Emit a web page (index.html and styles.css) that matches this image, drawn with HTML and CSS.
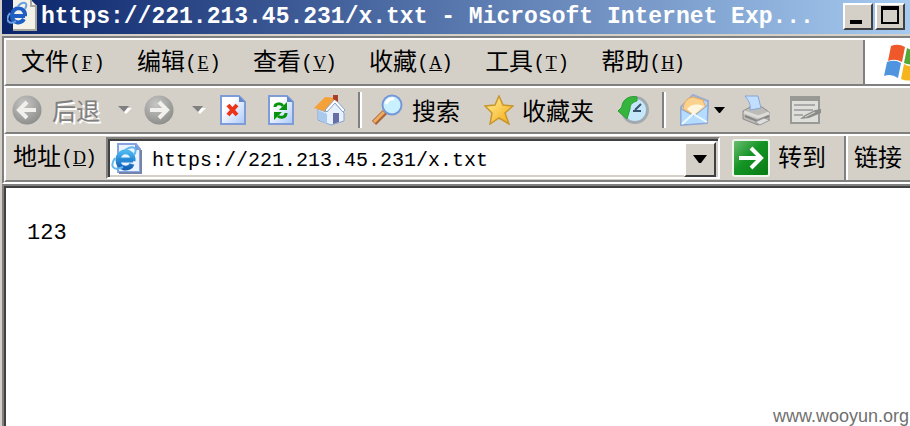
FILE: index.html
```html
<!DOCTYPE html>
<html lang="zh-CN">
<head>
<meta charset="utf-8">
<title>https://221.213.45.231/x.txt</title>
<link rel="stylesheet" href="styles.css">
</head>
<body>
<svg class="defs" aria-hidden="true">
  <defs>
    <linearGradient id="paper" x1="0" y1="0" x2="1" y2="1"><stop offset="0.3" stop-color="#fff"/><stop offset="1" stop-color="#a9c8f8"/></linearGradient>
    <radialGradient id="disc" cx="0.4" cy="0.3" r="0.75"><stop offset="0" stop-color="#c6c6c4"/><stop offset="1" stop-color="#8b8b89"/></radialGradient>
    <linearGradient id="gold" x1="0" y1="0" x2="1" y2="1"><stop offset="0" stop-color="#fff3a0"/><stop offset="1" stop-color="#f5a70c"/></linearGradient>
    <linearGradient id="blue" x1="0" y1="0" x2="0" y2="1"><stop offset="0" stop-color="#49b5ef"/><stop offset="1" stop-color="#1262b8"/></linearGradient>
    <linearGradient id="go" x1="0" y1="0" x2="1" y2="1"><stop offset="0" stop-color="#6fbf74"/><stop offset="0.45" stop-color="#159425"/><stop offset="1" stop-color="#087a12"/></linearGradient>
  </defs>
</svg>
<div class="window">
  <header class="titlebar">
    <svg class="page-icon" width="32" height="32" viewBox="0 0 32 32" aria-hidden="true">
      <path d="M6 0h18l6 6v25H6z" fill="#f4f2e8"/><path d="M29 7v23H6M24 0v6h6" fill="none" stroke="#a8a69e" stroke-width="2"/>
      <path d="M18 16H6M18 16C19 6 5 6 5 15s9 9 12 4" fill="none" stroke="#1f5fc4" stroke-width="4"/>
      <path d="M3 13C-3 21 3 25 9 21M11 6c5-5 11-4 7 3" fill="none" stroke="#6b9fe0" stroke-width="2"/>
    </svg>
    <h1 class="title">https://221.213.45.231/x.txt - Microsoft Internet Exp...</h1>
    <button class="caption" aria-label="最小化"><svg width="26" height="22" viewBox="0 0 26 22"><path d="M5 15h12v4H5z"/></svg></button>
    <button class="caption" aria-label="最大化"><svg width="26" height="22" viewBox="0 0 26 22"><path d="M4 1h18v18H4zM6 5v12h14V5z" fill-rule="evenodd"/></svg></button>
  </header>
  <div class="bars">
    <div class="row menu-row">
      <nav class="menu">
        <button>文件<span class="key">(<u>F</u>)</span></button>
        <button>编辑<span class="key">(<u>E</u>)</span></button>
        <button>查看<span class="key">(<u>V</u>)</span></button>
        <button>收藏<span class="key">(<u>A</u>)</span></button>
        <button>工具<span class="key">(<u>T</u>)</span></button>
        <button>帮助<span class="key">(<u>H</u>)</span></button>
      </nav>
      <div class="brand">
        <svg width="26" height="40" viewBox="0 0 26 40" aria-hidden="true">
          <path d="M7 4q7-3 14 1l-3 15q-7-4-14-1z" fill="#ee582a"/>
          <path d="M23 6q7 4 14 1l-3 14q-7 3-14 0z" fill="#55a832"/>
          <path d="M3 20q8-3 14 1l-3 15q-7-5-14-2z" fill="#4e94df"/>
          <path d="M20 22q7 4 14 1l-3 14q-7 3-14 0z" fill="#f5b51d"/>
        </svg>
      </div>
    </div>
    <div class="row toolbar">
      <button class="tool back off">
        <svg width="30" height="30" viewBox="0 0 30 30"><circle cx="15" cy="15" r="14.5" fill="url(#disc)"/><path d="M24 15H8M15 7l-8 8 8 8" fill="none" stroke="#f1f0ec" stroke-width="4"/></svg>后退</button>
      <button class="tool drop" aria-label="后退列表"><svg width="14" height="8" viewBox="0 0 14 8"><path d="M2 2h12L8 8z" fill="#fff"/><path d="M0 0h11L6 6z" fill="#808080"/></svg></button>
      <button class="tool" aria-label="前进"><svg width="30" height="30" viewBox="0 0 30 30"><circle cx="15" cy="15" r="14.5" fill="url(#disc)"/><path d="M6 15h16M15 7l8 8-8 8" fill="none" stroke="#f1f0ec" stroke-width="4"/></svg></button>
      <button class="tool drop" aria-label="前进列表"><svg width="14" height="8" viewBox="0 0 14 8"><path d="M2 2h12L8 8z" fill="#fff"/><path d="M0 0h11L6 6z" fill="#808080"/></svg></button>
      <button class="tool stop" aria-label="停止"><svg width="26" height="30" viewBox="0 0 26 30"><path d="M1 1h18l6 6v22H1z" fill="url(#paper)" stroke="#7f9cd8" stroke-width="2"/><path d="M19 1v6h6z" fill="#6687cb"/><path d="M8 10l9 10M17 10l-9 10" stroke="#ec3418" stroke-width="4"/></svg></button>
      <button class="tool refresh" aria-label="刷新"><svg width="26" height="30" viewBox="0 0 26 30"><path d="M1 1h18l6 6v22H1z" fill="url(#paper)" stroke="#7f9cd8" stroke-width="2"/><path d="M19 1v6h6z" fill="#6687cb"/><path d="M7 12c0-4 6-4 8-1M18 18c0 5-6 5-8 3" fill="none" stroke="#07940d" stroke-width="3"/><path d="M19 7v8h-8zM6 25v-8h8z" fill="#07940d"/></svg></button>
      <button class="tool home" aria-label="主页"><svg width="32" height="32" viewBox="0 0 32 32"><path d="M4 15l8 3 9-9 9 10v8l-13 4-13-5z" fill="#e8f2ff" stroke="#86a5cf"/><path d="M4 16l9 4v10l-9-5z" fill="#a9c9ed"/><path d="M0 14L11 3l11 1-9 14z" fill="#f5a13a"/><path d="M21 5l10 11-2 2-8-9-8 9-2-2z" fill="#fff" stroke="#8ba6c9"/><path d="M19 1h5v7l-5-3z" fill="#a83e2c"/><path d="M19 19h6v9l-6 2z" fill="#656fa6"/></svg></button>
      <span class="sep"></span>
      <button class="tool search"><svg width="32" height="32" viewBox="0 0 32 32"><path d="M13 18L2 29" stroke="#a9663a" stroke-width="6"/><path d="M12 18L2 28" stroke="#f1ac64" stroke-width="3"/><circle cx="20" cy="11" r="9.5" fill="#c8f0ff" stroke="#7698d8" stroke-width="2"/><path d="M14 10q2-6 8-5" fill="none" stroke="#fff" stroke-width="3"/></svg>搜索</button>
      <button class="tool fav"><svg width="30" height="30" viewBox="0 0 30 30"><path d="M15 1l4 9 10 1-8 7 4 11-10-6-9 6 2-11-7-7 10-1z" fill="url(#gold)" stroke="#c9962d" stroke-width="1.5"/></svg>收藏夹</button>
      <button class="tool history" aria-label="历史"><svg width="32" height="30" viewBox="0 0 32 30"><circle cx="17" cy="15" r="12.5" fill="#c4e8fa" stroke="#a3a9b0" stroke-width="3"/><path d="M17 15l6-6M15 16h8" stroke="#38546c" stroke-width="2"/><path d="M19 2C11 0 4 5 4 12l-4 4 9 8 3-10c0-5 3-7 7-8z" fill="#35b53b" stroke="#2d9c37"/></svg></button>
      <span class="sep"></span>
      <button class="tool mail" aria-label="邮件"><svg width="30" height="32" viewBox="0 0 30 32"><path d="M1 13L13 1l15 6-1 22-26 2z" fill="#b9dafa" stroke="#9cadd2" stroke-width="2"/><path d="M3 15q1-11 10-12l10 3 3 8-12 7z" fill="#fbd18f" stroke="#e6a95b"/><path d="M7 15q6-7 17-3l-10 9z" fill="#fff6df"/><path d="M1 15l13 7 14-11-1 18-26 2z" fill="#b4dcff" stroke="#8aa5d5"/><path d="M2 30l11-10 14 8" fill="none" stroke="#eff9ff" stroke-width="2"/></svg></button>
      <button class="tool drop mail-drop" aria-label="邮件列表"><svg width="12" height="7" viewBox="0 0 12 7"><path d="M0 0h11L6 6H5z"/></svg></button>
      <button class="tool print" aria-label="打印"><svg width="30" height="32" viewBox="0 0 30 32"><path d="M1 17l9-5 10 1 7 5v8l-11 5-15-6z" fill="#bcbbb8" stroke="#8b8b89"/><path d="M3 2h13l3 12-11 2c1-5-1-9-5-14z" fill="#c2deff" stroke="#86a5d5"/><path d="M2 18l14 5 11-4" fill="none" stroke="#dddcd8" stroke-width="3"/><path d="M3 22l12 5 12-5" fill="none" stroke="#858583" stroke-width="2"/><path d="M13 28l9-4 6 2-10 5z" fill="#ddd" stroke="#999"/></svg></button>
      <button class="tool edit" aria-label="编辑"><svg width="32" height="30" viewBox="0 0 32 30"><path d="M1 2h28v26H1z" fill="#dededb" stroke="#999995" stroke-width="2"/><path d="M1 2h28v4H1z" fill="#999994"/><path d="M4 10h21M4 15h19M4 20h9" stroke="#aaa" stroke-width="2"/><path d="M10 24l5-4 10-5 6-1v4l-12 5z" fill="#8b8b88"/><path d="M15 22l10-5" stroke="#ddd"/></svg></button>
    </div>
    <form class="row address-row" onsubmit="return false">
      <label for="address">地址<span class="key">(<u>D</u>)</span></label>
      <div class="field">
        <svg width="32" height="32" viewBox="0 0 32 32" aria-hidden="true"><path d="M7 1h18l4 5v23H7z" fill="#eaf3ff" stroke="#86a4e0" stroke-width="2"/><path d="M24 1v6h5z" fill="#7796d8"/><path d="M30 7v23H8" fill="none" stroke="#7683a8" stroke-width="2"/><path d="M22 17H8M22 18c1-12-15-12-15-1 0 10 12 10 14 4" fill="none" stroke="url(#blue)" stroke-width="5"/><path d="M8 17h14" stroke="#2588d4" stroke-width="3"/><path d="M4 15c-6 9-1 13 8 9M14 7c7-5 14-3 9 5" fill="none" stroke="#62b8ec" stroke-width="2"/></svg>
        <input id="address" type="text" value="https://221.213.45.231/x.txt" spellcheck="false">
        <button type="button" class="open" aria-label="打开列表"><svg width="16" height="8" viewBox="0 0 16 8"><path d="M1 0h14L9 8H7z"/></svg></button>
      </div>
      <button class="go"><svg width="38" height="38" viewBox="0 0 38 38"><rect x="1" y="1" width="36" height="36" rx="2" fill="url(#go)" stroke="#eef6eb" stroke-width="2"/><path d="M7 19h21M19 9l10 10-10 10" fill="none" stroke="#fff" stroke-width="4"/></svg><span>转到</span></button>
      <button type="button" class="links">链接</button>
    </form>
  </div>
  <main class="content"><pre>123</pre><footer>www.wooyun.org</footer></main>
</div>
</body>
</html>
```
FILE: styles.css
```css
* { box-sizing: border-box; }
body {
  margin: 0;
  background: #d4d0c8;
  color: #000;
  font: 24px/28px "Noto Sans CJK SC", sans-serif;
  overflow: hidden;
}
.defs { position: absolute; width: 0; height: 0; }
svg { display: block; flex: none; }
button {
  padding: 0;
  border: 0;
  background: none;
  color: inherit;
  font: inherit;
  white-space: nowrap;
}
.window {
  display: flex;
  flex-direction: column;
  min-height: 100vh;
  padding-left: 2px;
}
.titlebar {
  display: flex;
  align-items: center;
  gap: 2px;
  height: 34px;
  padding: 0 5px 2px;
  background: linear-gradient(90deg, #0a246a, #a6caf0);
}
.title {
  flex: 1;
  min-width: 0;
  margin: 0;
  padding-top: 2px;
  overflow: hidden;
  color: #fff;
  font: bold 23px/28px "Liberation Mono", monospace;
  white-space: nowrap;
}
.caption {
  height: 27px;
  border: 2px solid;
  border-color: #fff #404040 #404040 #fff;
  background: #d4d0c8;
}
.bars {
  margin-top: 2px;
  border-top: 2px solid #808080;
  border-bottom: 2px solid #fff;
  border-left: 2px solid #808080;
}
.row {
  display: flex;
  align-items: center;
  height: 48px;
  border-top: 2px solid #fff;
  border-bottom: 2px solid #808080;
  border-left: 2px solid #fff;
}
.menu {
  display: flex;
  flex: 1;
  align-self: stretch;
  align-items: center;
  gap: 32px;
  padding: 0 0 2px 15px;
  border-right: 2px solid #808080;
}
.key {
  display: inline-block;
  vertical-align: middle;
  font: 20px/24px "Liberation Mono", monospace;
}
u {
  display: inline-block;
  width: 12px;
  font: 18px/20px "Liberation Serif", serif;
  text-align: center;
}
.brand {
  display: flex;
  align-self: stretch;
  align-items: center;
  justify-content: flex-end;
  width: 45px;
  border-left: 2px solid #fff;
  background: #fff;
}
.tool { display: flex; align-items: center; gap: 10px; }
.toolbar { padding-left: 6px; }
.off { color: #808080; text-shadow: 2px 2px #fff; }
.drop { margin: 0 12px 0 18px; }
.stop { margin-left: 2px; }
.refresh { margin-left: 22px; }
.home { margin-left: 20px; }
.sep {
  width: 4px;
  height: 36px;
  margin: 0 10px 0 12px;
  border-left: 2px solid #808080;
  border-right: 2px solid #fff;
}
.search { gap: 8px; }
.fav { gap: 8px; margin-left: 24px; }
.history { margin-left: 24px; }
.mail { margin-left: 4px; }
.mail-drop { margin: 0 16px 0 4px; }
.edit { margin-left: 18px; }
.address-row { padding-left: 7px; }
.address-row label { padding-bottom: 4px; }
.field {
  display: flex;
  flex: 1;
  align-items: center;
  min-width: 0;
  height: 42px;
  margin: 0 12px 0 9px;
  padding: 2px 2px 0 3px;
  border: 2px solid;
  border-color: #808080 #fff #fff #808080;
  box-shadow: inset 2px 2px #404040, inset -2px -2px #d4d0c8;
  background: #fff;
}
.field input {
  flex: 1;
  min-width: 0;
  padding: 4px 0 0 9px;
  border: 0;
  outline: 0;
  background: none;
  font: 20px/28px "Liberation Mono", monospace;
}
.open {
  display: flex;
  align-items: center;
  justify-content: center;
  width: 32px;
  height: 35px;
  border: 2px solid;
  border-color: #fff #404040 #404040 #fff;
  background: #d4d0c8;
}
.go { display: flex; align-items: center; gap: 8px; }
.go span { padding-bottom: 4px; }
.links {
  align-self: stretch;
  margin-left: 18px;
  padding: 0 8px 4px;
  border-left: 2px solid #808080;
  box-shadow: inset 2px 0 #fff;
}
.content {
  display: flex;
  flex: 1;
  flex-direction: column;
  justify-content: space-between;
  margin: 2px 0 0 2px;
  border: 2px solid #404040;
  border-width: 2px 0 0 2px;
  outline: 2px solid #808080;
  background: #fff;
}
.content pre {
  margin: 0;
  padding: 32px 21px;
  font: 22px/28px "Liberation Mono", monospace;
}
.content footer {
  padding-right: 1px;
  color: #707070;
  font: 18px/20px "Liberation Sans", sans-serif;
  text-align: right;
}
```
